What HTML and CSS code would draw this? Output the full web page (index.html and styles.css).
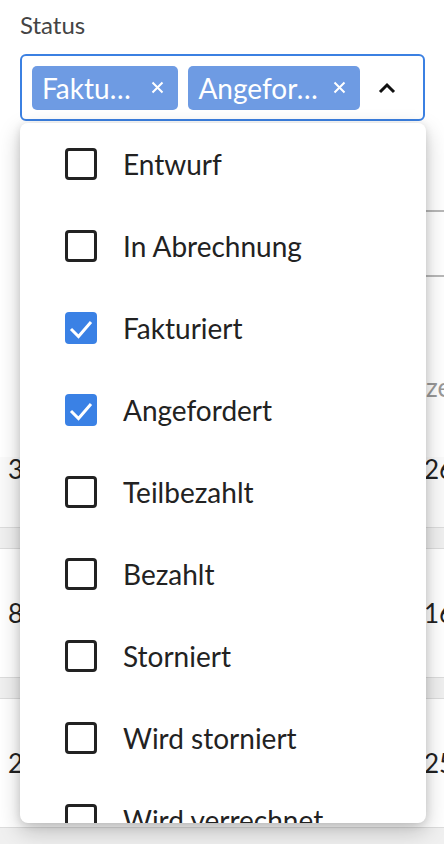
FILE: index.html
```html
<!doctype html>
<html lang="de">
<head>
  <meta charset="UTF-8">
  <meta name="viewport" content="width=device-width, initial-scale=1">
  <title>Rechnungen filtern</title>
  <link rel="stylesheet" href="styles.css">
</head>
<body>
  <div class="page">
    <!-- Filterbereich oben -->
    <section class="filters">
      <label class="label">Status</label>
      <div class="select">
        <div class="chips">
          <span class="chip">
            <span class="chip-text">Fakturiert</span>
            <svg class="chip-x" viewBox="0 0 13 13"><path d="M1.5 1.5 L11.5 11.5 M11.5 1.5 L1.5 11.5"/></svg>
          </span>
          <span class="chip">
            <span class="chip-text">Angefordert</span>
            <svg class="chip-x" viewBox="0 0 13 13"><path d="M1.5 1.5 L11.5 11.5 M11.5 1.5 L1.5 11.5"/></svg>
          </span>
        </div>
        <div class="toggle">
          <svg viewBox="0 0 18 12"><polyline points="2,10 9,3 16,10"/></svg>
        </div>
      </div>
      <div class="field-box"></div>
      <div class="colhead">
        <span>Rechnung</span>
        <span>zeitraum</span>
      </div>
    </section>

    <!-- Liste hinter dem Menü -->
    <div class="list">
      <div class="row first"><span>3.480,00 €</span><span>26.03.2024</span></div>
      <div class="sep"></div>
      <div class="row"><span>8.120,50 €</span><span>16.03.2024</span></div>
      <div class="sep"></div>
      <div class="row"><span>2.940,00 €</span><span>25.02.2024</span></div>
      <div class="end"></div>
    </div>

    <!-- geöffnetes Auswahlmenü -->
    <ul class="menu">
      <li class="opt"><span class="box"></span>Entwurf</li>
      <li class="opt"><span class="box"></span>In Abrechnung</li>
      <li class="opt"><span class="box on"><svg viewBox="0 0 32 32"><polyline points="6,17 13.5,24.5 26,10"/></svg></span>Fakturiert</li>
      <li class="opt"><span class="box on"><svg viewBox="0 0 32 32"><polyline points="6,17 13.5,24.5 26,10"/></svg></span>Angefordert</li>
      <li class="opt"><span class="box"></span>Teilbezahlt</li>
      <li class="opt"><span class="box"></span>Bezahlt</li>
      <li class="opt"><span class="box"></span>Storniert</li>
      <li class="opt"><span class="box"></span>Wird storniert</li>
      <li class="opt"><span class="box"></span>Wird verrechnet</li>
      <li class="opt"><span class="box"></span>Verrechnet</li>
    </ul>
  </div>
</body>
</html>
```

FILE: styles.css
```css
* {
  box-sizing: border-box;
}
body {
  margin: 0;
  font-family: Lato, "Noto Sans", sans-serif;
  color: #222;
  background: #f0f0f0;
  overflow: hidden;
}
.page {
  position: relative;
  width: 444px;
  height: 844px;
  overflow: hidden;
}

/* Filter */
.filters {
  background: #fff;
  padding: 11px 0 58px 20px;
}
.label {
  display: block;
  font-size: 24px;
  line-height: 28px;
  color: #444;
}
.select {
  display: flex;
  align-items: center;
  width: 405px;
  height: 67px;
  margin-top: 15px;
  padding: 0 0 0 10px;
  border: 2px solid #3b80e2;
  border-radius: 6px;
}
.chips {
  display: flex;
  gap: 10px;
  flex: 1;
  min-width: 0;
}
.chip {
  display: flex;
  align-items: center;
  gap: 11px;
  min-width: 0;
  height: 44px;
  padding: 0 14px 0 10px;
  background: #6e9be3;
  border-radius: 5px;
  color: #fff;
  font-size: 28px;
}
.chip-text {
  overflow: hidden;
  white-space: nowrap;
  text-overflow: ellipsis;
}
.chip-x {
  flex: none;
  width: 13px;
  height: 13px;
  stroke: #fff;
  stroke-width: 2;
  fill: none;
}
.toggle {
  flex: none;
  width: 63px;
  padding-left: 18px;
  display: flex;
}
.toggle svg {
  width: 18px;
  height: 12px;
  stroke: #111;
  stroke-width: 3;
  fill: none;
}
.field-box {
  height: 67px;
  margin-top: 89px;
  border-top: 2px solid #b8b8b8;
  border-bottom: 2px solid #b8b8b8;
}
.colhead {
  display: grid;
  grid-template-columns: 406px auto;
  margin-top: 98px;
  font-size: 26px;
  line-height: 24px;
  color: #999;
  white-space: nowrap;
}

/* Liste */
.list {
  background: #fafafa;
}
.row {
  display: grid;
  grid-template-columns: 416px auto;
  height: 128px;
  padding: 52px 0 0 8px;
  font-size: 26px;
  line-height: 24px;
  white-space: nowrap;
  background: #fff;
}
.row.first {
  height: 70px;
  padding-top: 0;
  background: #fafafa;
}
.sep {
  height: 22px;
  background: #f0f0f0;
  border-top: 1px solid #dcdcdc;
  border-bottom: 1px solid #dcdcdc;
}
.end {
  border-top: 1px solid #dcdcdc;
  height: 20px;
  background: #f0f0f0;
}

/* Menü */
.menu {
  position: absolute;
  top: 123px;
  left: 20px;
  width: 406px;
  height: 700px;
  margin: 0;
  padding: 0;
  list-style: none;
  background: #fff;
  border-radius: 8px;
  overflow: hidden;
  box-shadow: 0 8px 22px rgba(0, 0, 0, 0.22), 0 2px 8px rgba(0, 0, 0, 0.12);
}
.opt {
  display: flex;
  align-items: center;
  gap: 26px;
  height: 82px;
  padding-left: 45px;
  font-size: 28px;
  color: #222;
}
.box {
  flex: none;
  width: 32px;
  height: 32px;
  border: 3px solid #222;
  border-radius: 4px;
}
.box.on {
  border: none;
  background: #3a81e5;
}
.box svg {
  display: block;
  width: 32px;
  height: 32px;
  stroke: #fff;
  stroke-width: 3;
  fill: none;
}
```
